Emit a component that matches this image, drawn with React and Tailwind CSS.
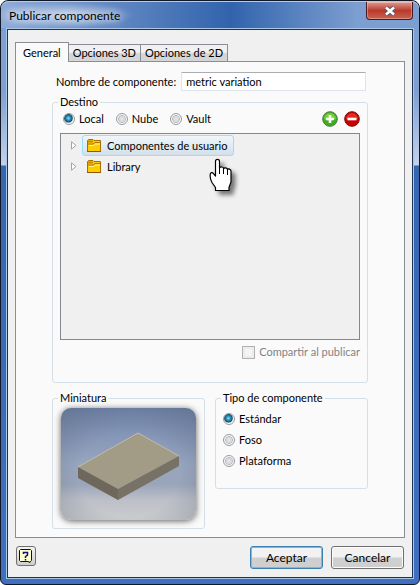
import { useState } from 'react'

const TABS = ['General', 'Opciones 3D', 'Opciones de 2D']

function Radio({ name, label, checked, onChange }) {
  return (
    <label className="flex items-center gap-1">
      <input
        type="radio"
        name={name}
        checked={checked}
        onChange={onChange}
        className="size-3 shrink-0 appearance-none rounded-full border border-[#9a9b9b] bg-[radial-gradient(circle_at_50%_50%,#e6e8ea_0,#d3d6da_42%,#bcc0c5_50%,#f8f8f8_62%)] checked:bg-[radial-gradient(circle_at_44%_42%,#8fe0fa_0,#2f9cc8_22%,#14506f_48%,#8fa3b0_54%,#f8f8f8_64%)]"
      />
      {label}
    </label>
  )
}

function Group({ title, className, children }) {
  return (
    <fieldset className={`min-w-0 rounded-[3px] border border-[#d5dfe8] px-[7px] ${className}`}>
      <legend className="-ml-0.5 h-[14px] px-0.5 leading-[14px]">{title}</legend>
      {children}
    </fieldset>
  )
}

function Folder() {
  return (
    <svg viewBox="0 0 14 13" className="h-[13px] w-[14px] shrink-0">
      <path d="M.5 1.500 1.500.5H6l1 1h6.500v11H.5z" fill="#ffcc00" stroke="#a87000" />
      <path d="M1 1.500h5v2H1z" fill="#c98a00" />
      <path d="M1 5h5l2-1.500h5" fill="none" stroke="#b07800" />
      <path d="M2 6.500h4.500l2-1.500H13" fill="none" stroke="#fff3a0" />
      <path d="M0 12.500h14" stroke="#8a5a00" />
    </svg>
  )
}

function TreeItem({ label, selected }) {
  return (
    <li className="flex h-[21px] items-center pl-2.5">
      <svg viewBox="0 0 6 9" className="h-[9px] w-1.5 shrink-0">
        <path d="M.5.8 5 4.500.5 8.200z" fill="#fff" stroke="#a6a6a6" />
      </svg>
      <button
        type="button"
        className={`ml-[5px] flex h-[21px] items-center gap-1.5 rounded-[3px] border pr-1.5 pl-1 ${
          selected ? 'border-[#99defd] bg-linear-to-b from-[#f0f6fa] to-[#d3e0ea]' : 'border-transparent'
        }`}
      >
        <Folder />
        {label}
      </button>
    </li>
  )
}

function HandCursor() {
  return (
    <svg viewBox="0 0 24 36" className="pointer-events-none absolute top-6 left-[148px] h-9 w-6 drop-shadow-[4px_4px_2px_#00000080]">
      <path
        d="M6.500 18V3.500c0-2.700 4-2.700 4 0V10c.6-1.500 4-1.400 4 .6.700-1.300 4-1 4 1 .7-1.100 3.500-.7 3.500 1.400v11l-2 5.500v3H6.500v-3L3 24.500C1.600 22 .8 19 1.300 16c.4-1.600 2.200-1.800 3.200-.3z"
        fill="#fff"
        stroke="#000"
        strokeWidth="1.200"
        strokeLinejoin="round"
      />
      <path d="M10.500 10v6M14.500 11v5M18.500 12v5" stroke="#000" />
    </svg>
  )
}

function Thumbnail() {
  return (
    <svg viewBox="0 0 135 112" className="block h-[112px] w-full rounded-[10px] shadow-[0_1px_6px_#000000a0]" preserveAspectRatio="none">
      <defs>
        <linearGradient id="sky" x1="0" y1="0" x2="0" y2="1">
          <stop offset="0" stopColor="#7388af" />
          <stop offset="0.500" stopColor="#97a5bf" />
          <stop offset="0.680" stopColor="#9aa5ba" />
          <stop offset="0.820" stopColor="#bcbfc7" />
          <stop offset="1" stopColor="#cbcccf" />
        </linearGradient>
        <radialGradient id="shade" cx="0.500" cy="0.600" r="0.750">
          <stop offset="0.500" stopColor="#4a5468" stopOpacity="0" />
          <stop offset="1" stopColor="#4a5468" stopOpacity="0.350" />
        </radialGradient>
      </defs>
      <rect width="135" height="112" fill="url(#sky)" />
      <rect width="135" height="112" fill="url(#shade)" />
      <path d="M17 59 77 25 118 48 57 81z" fill="#a29b86" />
      <path d="M17 59v11l40 22V81z" fill="#6d685b" />
      <path d="M57 81v11l61-34V48z" fill="#777265" />
      <path d="M17 59 77 25l41 23" fill="none" stroke="#c2bca9" />
    </svg>
  )
}

export default function App() {
  const [tab, setTab] = useState('General')
  const [name, setName] = useState('metric variation')
  const [target, setTarget] = useState('Local')
  const [type, setType] = useState('Estándar')

  return (
    <div className="flex min-h-screen flex-col rounded-t-lg rounded-b-md border border-[#101828] bg-[linear-gradient(to_bottom,#7f9fd1_0,#7f9fd1_90px,#c3d2ea_164px,#3566b0_165px,#3f70bd_100%)] px-[5px] pb-[5px] font-['Lato','Liberation_Sans',sans-serif] text-[11px] leading-[14px] text-black">
      <header className="-mx-[5px] flex h-[27px] items-start justify-between rounded-t-lg border-t border-[#b5cdea] bg-linear-to-r from-[#8fabd8] via-[#3163ac] via-55% to-[#7c9ed0] to-85% pr-1.5 pl-2">
        <h1 className="-ml-4 rounded-full bg-radial from-[#ffffff80] to-transparent to-70% px-4 pt-1.5 pb-1 text-[12px] leading-4 [text-shadow:0_0_8px_#fff,0_0_12px_#fff]">
          Publicar componente
        </h1>
        <button
          type="button"
          aria-label="Cerrar"
          className="flex h-[18px] w-[47px] items-center justify-center rounded-b-[4px] border border-t-0 border-[#4a1a20] bg-linear-to-b from-[#dd9a90] via-[#b93a2c] via-50% to-[#c9614f] inset-ring inset-ring-[#ffffff50]"
        >
          <svg viewBox="0 0 12 10" className="h-2.5 w-3">
            <path d="m2 1.500 8 7M10 1.500l-8 7" stroke="#51586b" strokeWidth="4.500" />
            <path d="m2 1.500 8 7M10 1.500l-8 7" stroke="#fff" strokeWidth="2.600" />
          </svg>
        </button>
      </header>

      <div className="flex grow flex-col border border-[#a9c6e6]">
        <main className="flex grow flex-col border border-[#1f3354] bg-[#f0f0f0] px-[7px] pt-3 pb-2">
          <nav className="relative -mb-px flex items-end" role="tablist">
            {TABS.map((t) => (
              <button
                key={t}
                type="button"
                role="tab"
                aria-selected={t === tab}
                onClick={() => setTab(t)}
                className={`border border-[#8b8d94] ${
                  t === tab ? 'h-5 border-b-0 bg-[#fafafa] px-[7px]' : '-ml-px h-[18px] bg-linear-to-b from-[#f1f1f1] from-45% to-[#d5d5d8] to-55% px-1'
                }`}
              >
                {t}
              </button>
            ))}
          </nav>

          <section className="grow border border-[#8b8d94] bg-[#fafafa] px-9 pt-2.5 pb-2">
            <div className="flex items-center gap-[5px] pr-0.5 pl-1">
              <label htmlFor="name">Nombre de componente:</label>
              <input
                id="name"
                value={name}
                onChange={(e) => setName(e.target.value)}
                className="h-[19px] min-w-0 grow rounded-[1px] border border-[#dfe4ec] border-t-[#abadb3] bg-white px-1 outline-none"
              />
            </div>

            <Group title="Destino" className="mt-1 h-[288px]">
              <div className="flex h-5 items-center gap-3 pl-[3px]">
                {['Local', 'Nube', 'Vault'].map((t) => (
                  <Radio key={t} name="target" label={t} checked={t === target} onChange={() => setTarget(t)} />
                ))}
                <div className="ml-auto flex gap-1.5">
                  <button type="button" aria-label="Añadir">
                    <svg viewBox="0 0 16 16" className="size-4">
                      <circle cx="8" cy="8" r="7.300" fill="#3fae1c" stroke="#4c7a40" />
                      <path d="M2 8a6 6 0 0 1 12 0q-6 3-12 0" fill="#74cf3c" />
                      <path d="M8 4v8M4 8h8" stroke="#fff" strokeWidth="2.600" />
                    </svg>
                  </button>
                  <button type="button" aria-label="Quitar">
                    <svg viewBox="0 0 16 16" className="size-4">
                      <circle cx="8" cy="8" r="7.300" fill="#c80000" stroke="#7c0a0a" />
                      <path d="M2 8a6 6 0 0 1 12 0q-6 3-12 0" fill="#e22a22" />
                      <path d="M3.500 8h9" stroke="#fff" strokeWidth="2.600" />
                    </svg>
                  </button>
                </div>
              </div>
              <div className="relative mt-1 h-[207px] border border-[#828790] bg-[#f0f0f0] pt-px">
                <ul>
                  <TreeItem label="Componentes de usuario" selected />
                  <TreeItem label="Library" />
                </ul>
                <HandCursor />
              </div>
              <label className="mt-[5px] flex items-center justify-end gap-1 text-[#838383]">
                <input
                  type="checkbox"
                  disabled
                  className="size-[13px] appearance-none border border-[#b1b1b1] bg-[#f4f4f4] inset-ring-2 inset-ring-[#ececec]"
                />
                Compartir al publicar
              </label>
            </Group>

            <div className="mt-2 grid grid-cols-2 items-start gap-2.5">
              <Group title="Miniatura" className="h-[138px]">
                <div className="mt-[3px] px-px">
                  <Thumbnail />
                </div>
              </Group>
              <Group title="Tipo de componente" className="h-[98px]">
                <div className="mt-[7px] flex flex-col gap-[7px]">
                  {['Estándar', 'Foso', 'Plataforma'].map((t) => (
                    <Radio key={t} name="type" label={t} checked={t === type} onChange={() => setType(t)} />
                  ))}
                </div>
              </Group>
            </div>
          </section>

          <footer className="flex items-start gap-2 px-px pt-2">
            <button
              type="button"
              aria-label="Ayuda"
              className="mr-auto flex size-5 items-center justify-center rounded-[3px] border border-[#707070] bg-linear-to-b from-[#f3f3f3] to-[#cfcfcf]"
            >
              <svg viewBox="0 0 14 14" className="size-3.5">
                <path d="M1.500.5h10l1 1v10l-1 1H11v1l-2-1H1.500l-1-1v-10z" fill="#ffffcf" stroke="#111" />
                <path d="M4.500 5V3.500h4V6L6.500 7.500V9M6.500 10v1.500" fill="none" stroke="#10107a" strokeWidth="1.500" />
              </svg>
            </button>
            <button
              type="button"
              className="h-[23px] w-[73px] rounded-[3px] border border-[#3c7fb1] bg-linear-to-b from-[#f2f2f2] from-45% to-[#cfcfcf] to-55% text-[12px] inset-ring inset-ring-[#46d0f8]"
            >
              Aceptar
            </button>
            <button
              type="button"
              className="h-[23px] w-[73px] rounded-[3px] border border-[#707070] bg-linear-to-b from-[#f2f2f2] from-45% to-[#cfcfcf] to-55% text-[12px] inset-ring inset-ring-[#fbfbfb]"
            >
              Cancelar
            </button>
          </footer>
        </main>
      </div>
    </div>
  )
}
